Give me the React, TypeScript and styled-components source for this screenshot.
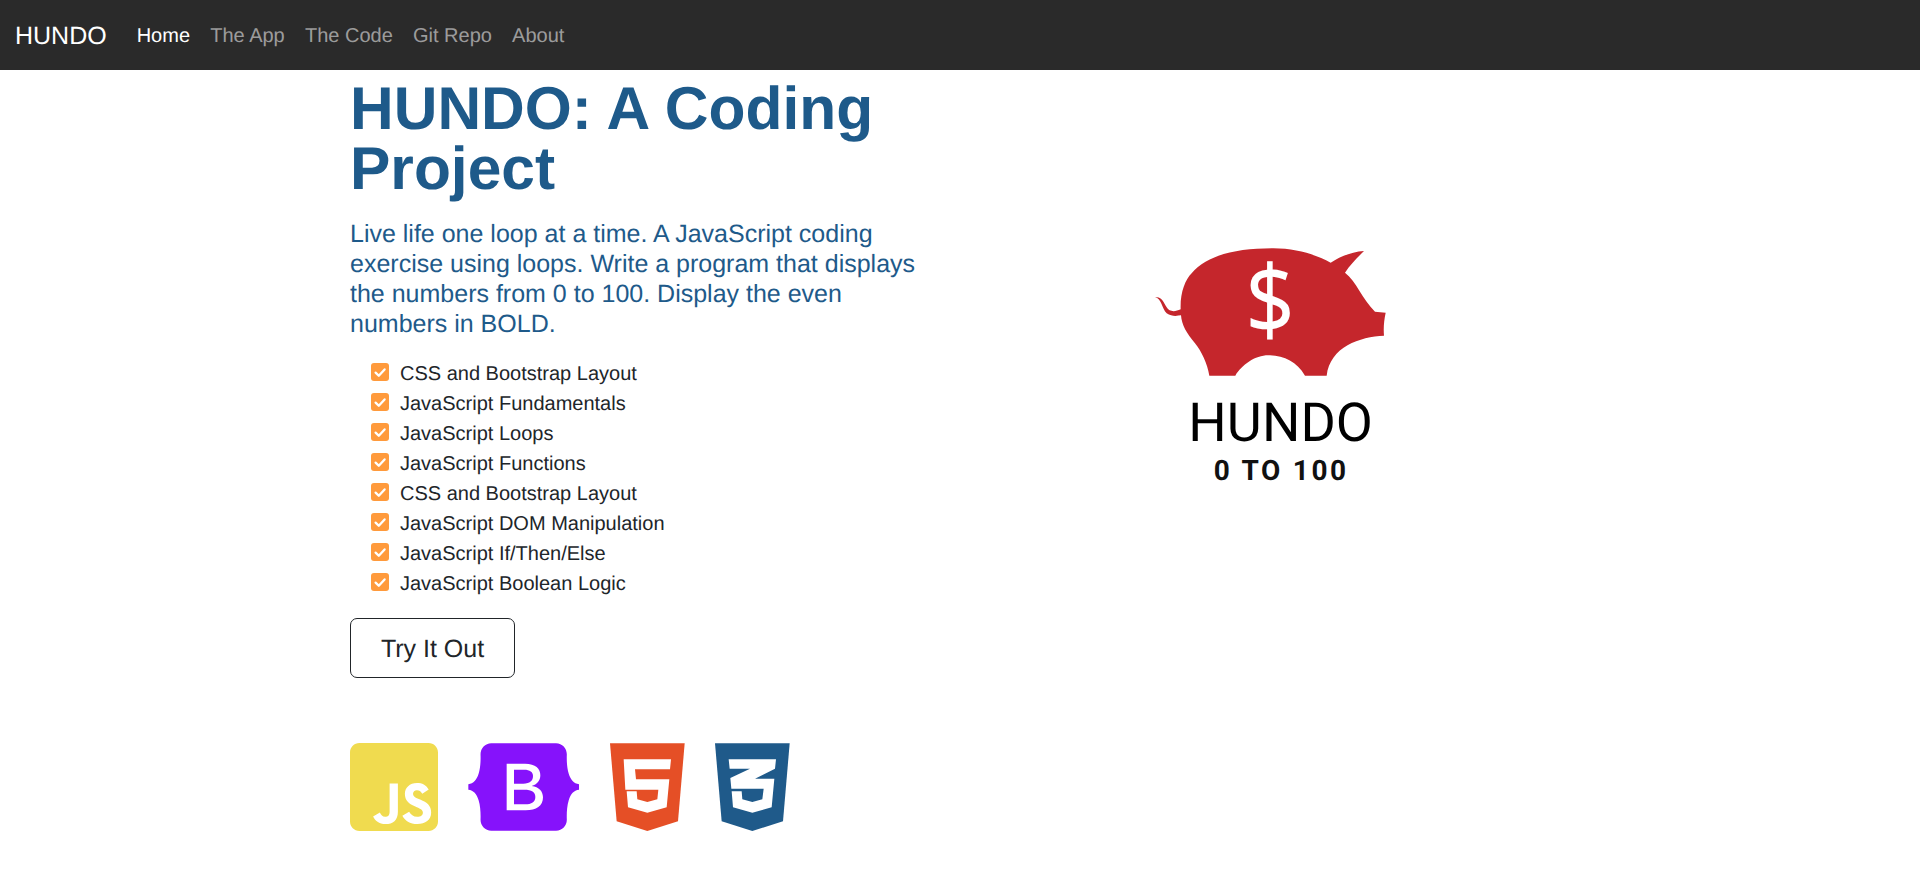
import React from "react";
import styled, { createGlobalStyle } from "styled-components";
import { FaJsSquare } from "react-icons/fa";

const Global = createGlobalStyle`
  html, body { margin: 0; padding: 0; background: #fff; }
  body {
    font-family: "Liberation Sans", Arial, sans-serif;
    color: #212529;
    text-rendering: geometricPrecision;
  }
  * { box-sizing: border-box; }
`;

const Navbar = styled.nav`
  height: 70px;
  background: #2a2a2a;
  display: flex;
  align-items: center;
  padding: 2px 15px 0;
`;
const Brand = styled.a`
  font-size: 25px;
  line-height: 36px;
  color: #fff;
  margin-right: 30px;
`;
const NavLink = styled.a<{ $active?: boolean }>`
  font-size: 20px;
  line-height: 30px;
  color: ${(p) => (p.$active ? "#fff" : "rgba(255,255,255,.55)")};
  margin-right: 20.2px;
`;
const Main = styled.main`
  display: flex;
  padding: 8px 0 0 350px;
`;
const Left = styled.section`
  width: 574px;
  flex: none;
`;
const Right = styled.section`
  width: 692px;
  flex: none;
  display: flex;
  justify-content: center;
  padding-top: 152px;
`;
const Title = styled.h1`
  margin: 0 0 21px;
  font-size: 60.5px;
  line-height: 60px;
  font-weight: 700;
  color: #1e5a8a;
`;
const Lead = styled.p`
  margin: 0 0 19px;
  font-size: 25px;
  line-height: 30px;
  color: #1e5a8a;
`;
const List = styled.ul`
  list-style: none;
  margin: 0 0 20px;
  padding: 0 0 0 21px;
`;
const Item = styled.li`
  display: flex;
  align-items: flex-start;
  gap: 11px;
  height: 30px;
  font-size: 20px;
  line-height: 32px;
  color: #212529;
`;
const Check = styled.svg`
  display: block;
  flex: none;
  width: 18px;
  height: 18px;
  margin-top: 5px;
`;
const TryButton = styled.a`
  display: block;
  width: 165px;
  height: 60px;
  border: 1px solid #212529;
  border-radius: 7px;
  font-size: 25px;
  line-height: 60px;
  text-align: center;
  color: #212529;
`;
const Tech = styled.div`
  display: flex;
  align-items: flex-start;
  margin-top: 60px;
  height: 98px;
`;
const JsIcon = styled(FaJsSquare)`
  display: block;
  width: 88px;
  height: 88px;
  margin: 5px 27px 0 0;
  color: #f0db4f;
`;
const BootIcon = styled.svg`
  display: block;
  width: 120px;
  height: 98px;
  margin-right: 15px;
`;
const Shield = styled.svg`
  display: block;
  width: 100px;
  height: 98px;
  margin-right: 5px;
`;
const Logo = styled.svg`
  display: block;
  width: 280px;
  height: 270px;
`;

const items = [
  "CSS and Bootstrap Layout",
  "JavaScript Fundamentals",
  "JavaScript Loops",
  "JavaScript Functions",
  "CSS and Bootstrap Layout",
  "JavaScript DOM Manipulation",
  "JavaScript If/Then/Else",
  "JavaScript Boolean Logic",
];

const SHIELD = "M30 16H254L234 250L142 279L50 250Z";

export default function App() {
  return (
    <>
      <Global />
      <Navbar>
        <Brand>HUNDO</Brand>
        <NavLink $active>Home</NavLink>
        <NavLink>The App</NavLink>
        <NavLink>The Code</NavLink>
        <NavLink>Git Repo</NavLink>
        <NavLink>About</NavLink>
      </Navbar>
      <Main>
        <Left>
          <Title>HUNDO: A Coding Project</Title>
          <Lead>
            Live life one loop at a time. A JavaScript coding exercise using loops. Write a program that displays the numbers from 0 to 100. Display the even numbers in BOLD.
          </Lead>
          <List>
            {items.map((t, i) => (
              <Item key={i}>
                <Check viewBox="0 0 18 18">
                  <rect width="18" height="18" rx="3" fill="#ff9a3c" />
                  <path d="M4.6 9.6L7.8 12.8L13.6 6.4" fill="none" stroke="#fff" strokeWidth="2.3" strokeLinecap="round" strokeLinejoin="round" />
                </Check>
                {t}
              </Item>
            ))}
          </List>
          <TryButton>Try It Out</TryButton>
          <Tech>
            <JsIcon viewBox="0 32 448 448" />
            <BootIcon viewBox="0 0 360 294">
              <path
                fill="#8612fb"
                transform="translate(10 16) scale(2.814 2.787)"
                d="M24.509 0c-6.733 0-11.715 5.893-11.492 12.284.214 6.14-.064 14.092-2.066 20.577C8.943 39.365 5.547 43.485 0 44.014v5.972c5.547.529 8.943 4.649 10.951 11.153 2.002 6.485 2.28 14.437 2.066 20.577C12.794 88.106 17.776 94 24.51 94H93.5c6.733 0 11.714-5.893 11.491-12.284-.214-6.14.064-14.092 2.066-20.577 2.009-6.504 5.396-10.624 10.943-11.153v-5.972c-5.547-.529-8.934-4.649-10.943-11.153-2.002-6.484-2.28-14.437-2.066-20.577C105.214 5.893 100.233 0 93.5 0H24.508z"
              />
              <path
                fill="#fff"
                fillRule="evenodd"
                d="M125 77H180C212 77 226 92 226 112C226 128 216 140 200 144C222 147 234 160 234 178C234 204 214 217 182 217H125ZM147 95V137H175C195 137 204 128 204 114C204 102 195 95 177 95ZM147 155V199H180C200 199 211 192 211 177C211 162 200 155 178 155Z"
              />
            </BootIcon>
            <Shield viewBox="0 0 300 294">
              <path fill="#e54f26" d={SHIELD} />
              <path fill="#fff" d="M71 64H213L210 94H105L108 124H208L200 208L142 224L84 208L80 160H110L112 184L142 192L172 184L175 155H76Z" />
            </Shield>
            <Shield viewBox="0 0 300 294">
              <path fill="#1f5a8a" d={SHIELD} />
              <path fill="#fff" d="M71 64H213L210 92L150 122H208L200 208L142 224L84 208L80 160H110L112 184L142 192L172 184L176 152H79L76 120L135 92H74Z" />
            </Shield>
          </Tech>
        </Left>
        <Right>
          <Logo viewBox="0 0 840 810">
            <path
              fill="#c5262c"
              d="M75 202C95 198 100 215 110 232C118 246 135 246 152 238C150 190 165 150 185 130C230 75 320 55 430 55C500 55 560 75 602 98C630 80 665 65 702 63C680 85 660 105 645 128C680 155 695 205 735 245L767 248C762 270 760 295 762 317C690 320 600 350 590 437H525C500 395 460 376 415 376C375 376 335 405 316 437H238C232 400 215 365 195 340C170 310 155 285 153 256C140 258 125 260 110 250C95 235 95 205 75 202Z"
            />
            <text transform="translate(420 313) scale(.9 1)" textAnchor="middle" fill="#fff" fontFamily="'Noto Sans', sans-serif" fontSize="288">$</text>
            <text x="452" y="632" textAnchor="middle" fill="#000" fontFamily="Roboto, sans-serif" fontWeight="400" fontSize="162">HUNDO</text>
            <text x="454" y="750" textAnchor="middle" fill="#111" fontFamily="Roboto, sans-serif" fontWeight="700" fontSize="84" letterSpacing="8">0 TO 100</text>
          </Logo>
        </Right>
      </Main>
    </>
  );
}
